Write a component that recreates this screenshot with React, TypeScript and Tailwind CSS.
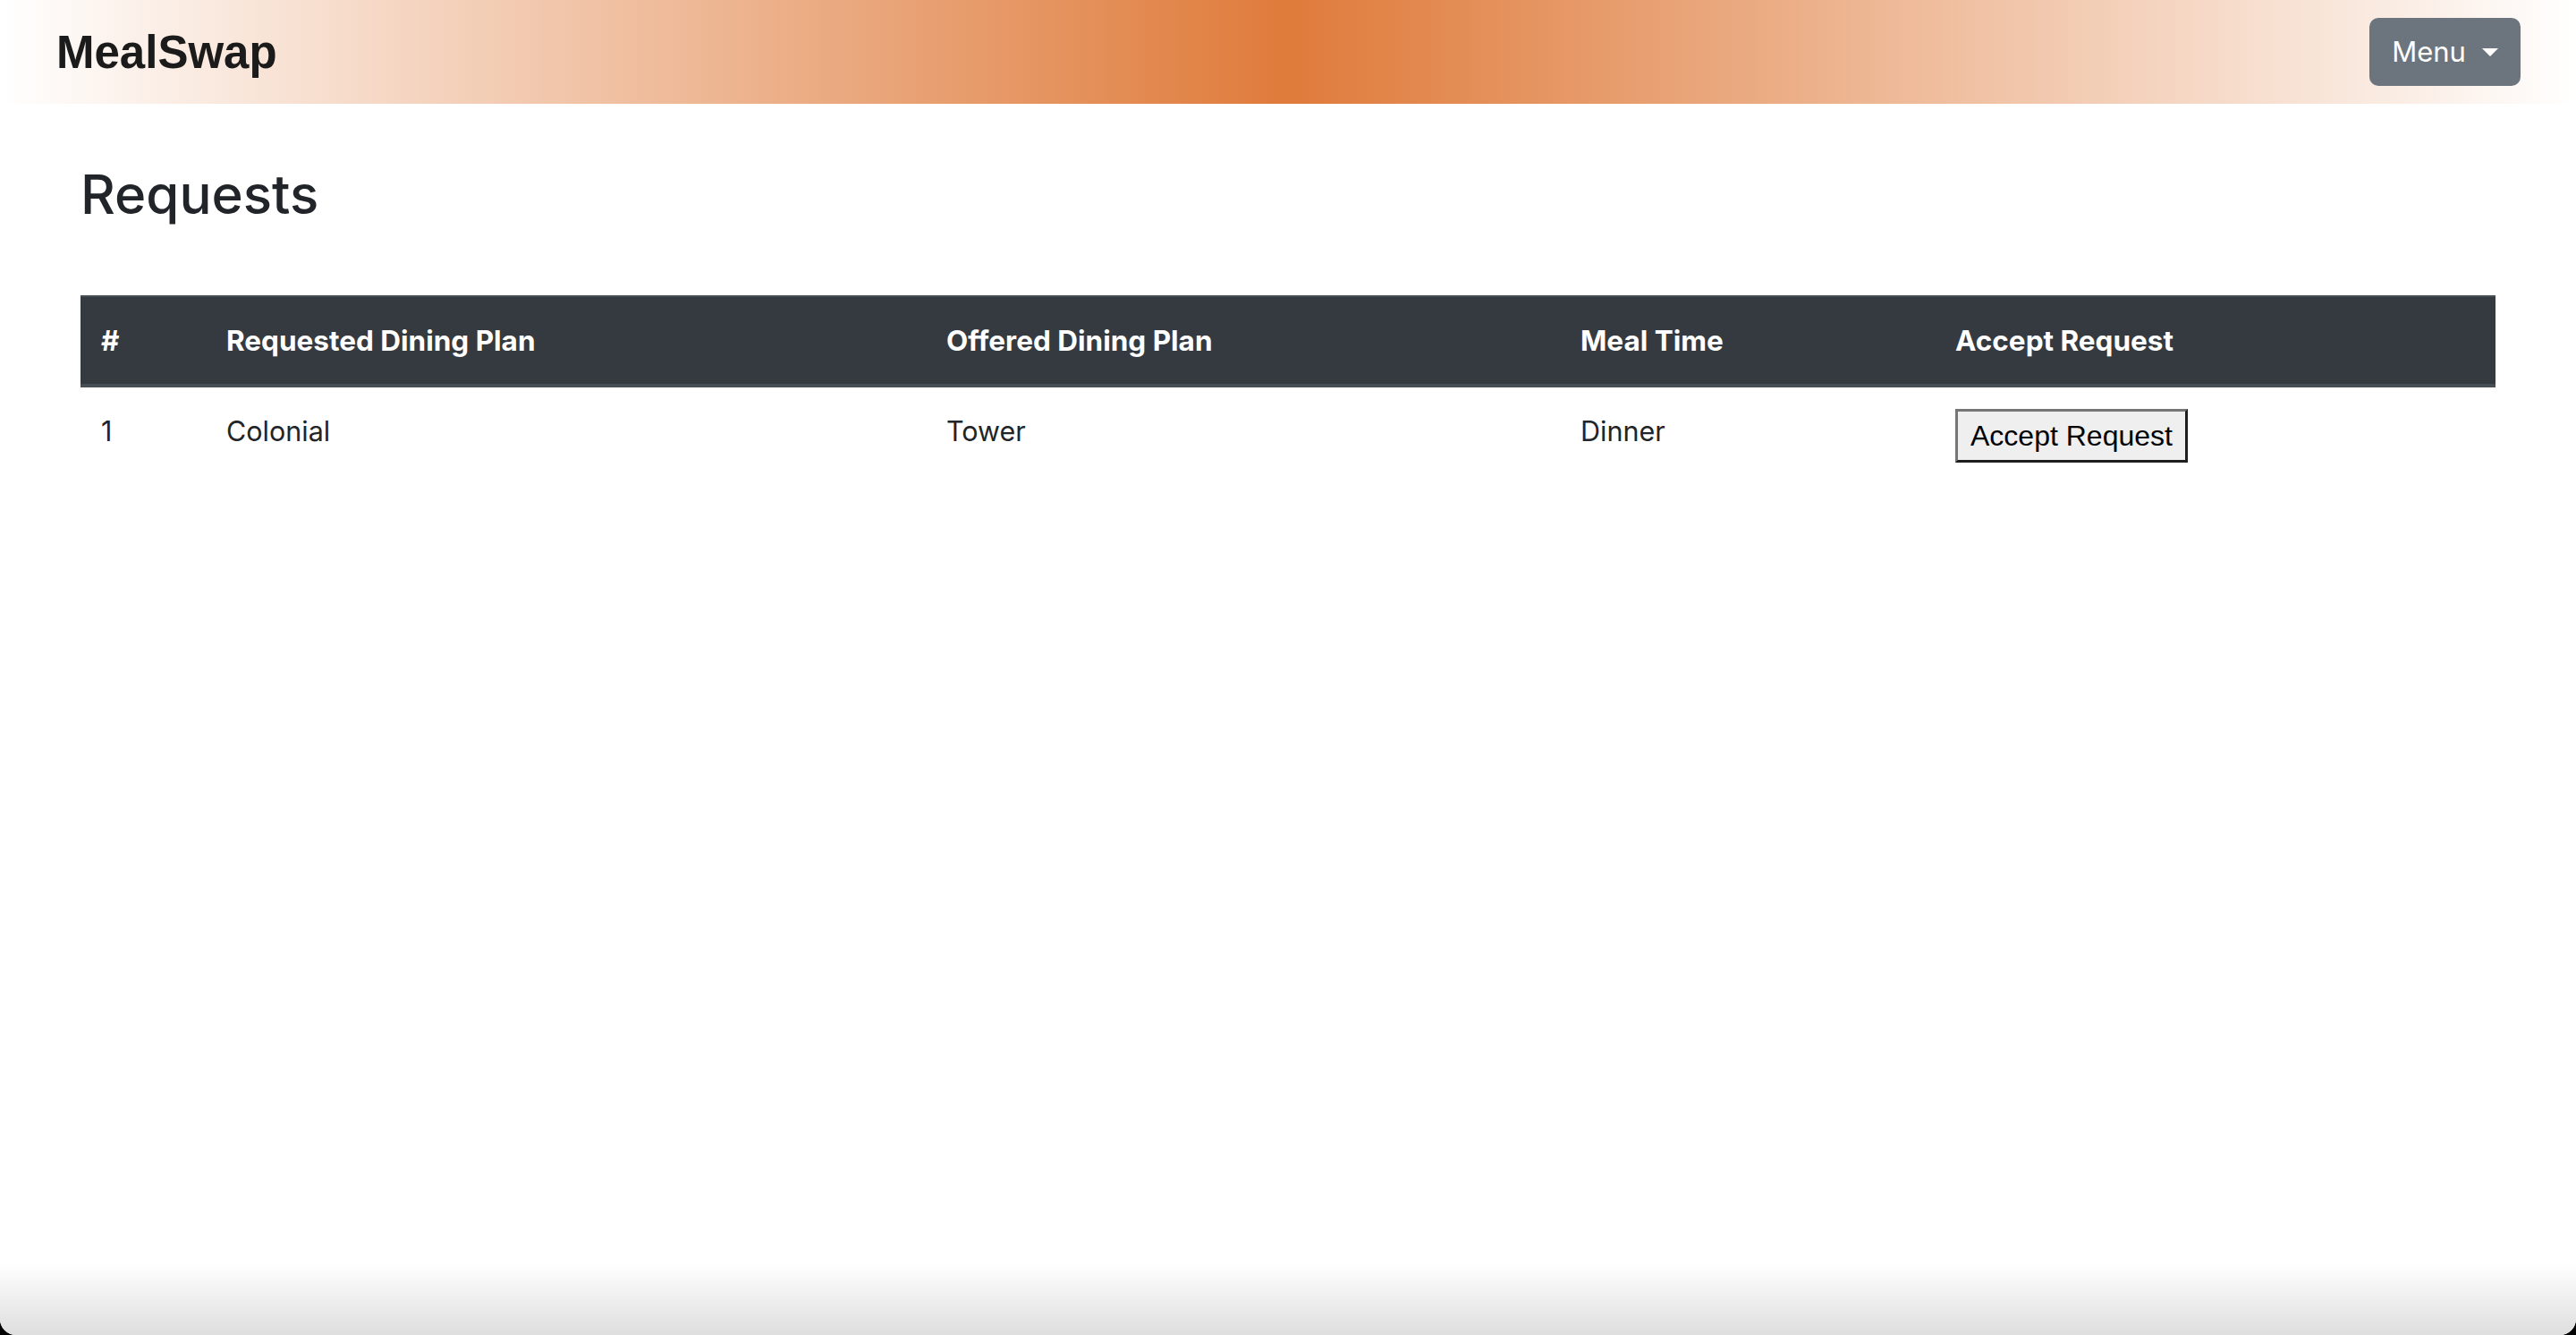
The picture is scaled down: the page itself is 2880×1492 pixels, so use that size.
import React from 'react';

const rows = [
  { id: 1, requested: 'Colonial', offered: 'Tower', mealTime: 'Dinner' },
];

const Navbar: React.FC = () => (
  <header className="h-[116px] shrink-0 flex items-center justify-between pl-[63px] pr-[62px] bg-[linear-gradient(to_right,#ffffff,#df7b3b,#ffffff)]">
    <span className="font-['Liberation_Sans',Arial,sans-serif] font-bold text-[51px] leading-none text-[#1b1b1b]">
      MealSwap
    </span>
    <button className="h-[76px] w-[169px] rounded-[10px] bg-[#6c757d] text-white text-[31px] font-['Inter',sans-serif] flex items-center justify-center gap-[18px]">
      <span>Menu</span>
      <span className="w-0 h-0 border-t-[9px] border-t-white border-x-[9px] border-x-transparent" />
    </button>
  </header>
);

export default function App() {
  return (
    <div className="min-h-screen bg-black">
      <div className="h-[1492px] bg-white rounded-b-[18px] overflow-hidden flex flex-col font-['Inter',sans-serif] text-[#212529]">
        <Navbar />
        <main className="flex-1 px-[90px]">
          <h2 className="mt-[67px] text-[60px] font-medium leading-[68px]">Requests</h2>
          <table className="mt-[79px] w-full table-fixed border-collapse text-[30.5px] leading-[42px]">
            <thead>
              <tr className="bg-[#343a40] text-white border-t-2 border-t-[#454d55] border-b-4 border-b-[#454d55]">
                <th className="w-[140px] text-left font-bold text-[31.5px] pl-[23px] h-[100px]">#</th>
                <th className="w-[805px] text-left font-bold text-[31.5px] pl-[23px]">Requested Dining Plan</th>
                <th className="w-[709px] text-left font-bold text-[31.5px] pl-[23px]">Offered Dining Plan</th>
                <th className="w-[419px] text-left font-bold text-[31.5px] pl-[23px]">Meal Time</th>
                <th className="text-left font-bold text-[31.5px] pl-[23px]">Accept Request</th>
              </tr>
            </thead>
            <tbody>
              {rows.map((r) => (
                <tr key={r.id}>
                  <td className="align-top pl-[23px] pt-[28px]">{r.id}</td>
                  <td className="align-top pl-[23px] pt-[28px]">{r.requested}</td>
                  <td className="align-top pl-[23px] pt-[28px]">{r.offered}</td>
                  <td className="align-top pl-[23px] pt-[28px]">{r.mealTime}</td>
                  <td className="align-top pl-[23px] pt-[24px] pb-[24px]">
                    <button className="h-[60px] px-[14px] bg-[#efefef] text-black text-[32px] leading-none font-['Liberation_Sans',Arial,sans-serif] border-[3px] border-t-[#767676] border-l-[#767676] border-b-[#1e1e1e] border-r-[#1e1e1e]">
                      Accept Request
                    </button>
                  </td>
                </tr>
              ))}
            </tbody>
          </table>
        </main>
        <div className="h-[80px] shrink-0 bg-[linear-gradient(to_bottom,#ffffff,#dedede)]" />
      </div>
    </div>
  );
}
